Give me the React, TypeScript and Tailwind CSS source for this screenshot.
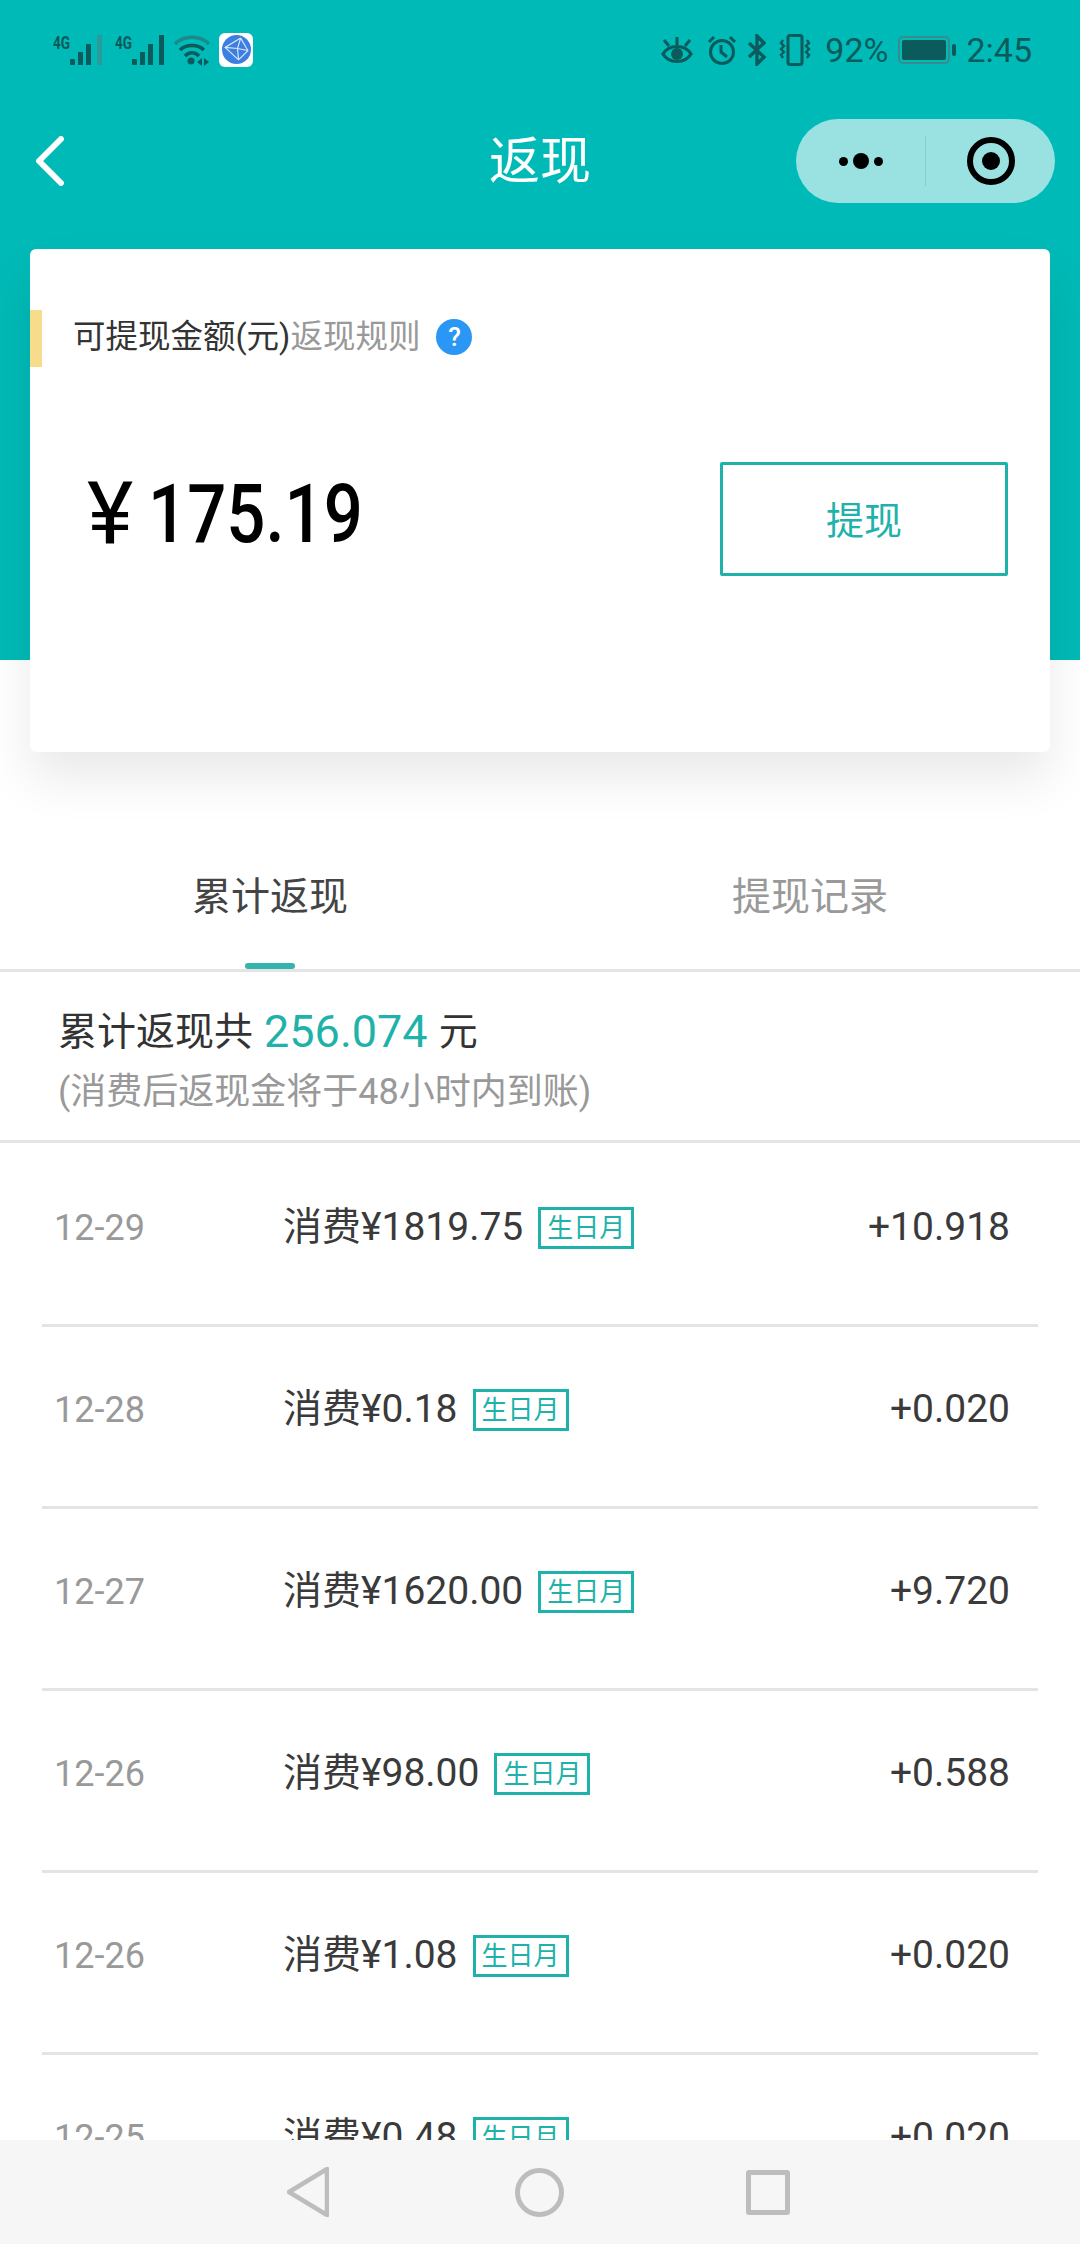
const CJK = "font-['Roboto','Noto_Sans_CJK_SC',sans-serif]";

const ROWS = [
  { date: "12-29", spend: "消费¥1819.75", back: "+10.918" },
  { date: "12-28", spend: "消费¥0.18", back: "+0.020" },
  { date: "12-27", spend: "消费¥1620.00", back: "+9.720" },
  { date: "12-26", spend: "消费¥98.00", back: "+0.588" },
  { date: "12-26", spend: "消费¥1.08", back: "+0.020" },
  { date: "12-25", spend: "消费¥0.48", back: "+0.020" },
];

// ─── Status bar icons ─────────────────────────────────────────────────────────

function Signal({ last }: { last: string }) {
  return (
    <svg viewBox="0 0 50 32" className="h-[32px] w-[50px]">
      <text x="0" y="15" fontSize="19" fontWeight="700" fill="#0b5a5c" fontFamily="Roboto" textLength="17" lengthAdjust="spacingAndGlyphs">4G</text>
      <g fill="#0b5a5c">
        <rect x="17" y="25" width="5" height="6" rx="1" />
        <rect x="25" y="18" width="5" height="13" />
        <rect x="33" y="10" width="5" height="21" />
      </g>
      <rect x="44" y="1" width="5" height="30" fill={last} />
    </svg>
  );
}

function Wifi() {
  return (
    <svg viewBox="0 0 38 32" fill="none" className="h-[32px] w-[38px]">
      <path d="M2 10C11 1 27 1 36 10" stroke="#1a8a8a" strokeWidth="3.5" />
      <path d="M7 16C13 10 25 10 31 16" stroke="#0b5a5c" strokeWidth="3.5" />
      <path d="M12 22C16 17.5 22 17.5 26 22" stroke="#0b5a5c" strokeWidth="3.5" />
      <circle cx="18" cy="27" r="3.5" fill="#0b5a5c" />
      <path d="M29 32v-8l-5 4zM31 24v8l5-4z" fill="#0b5a5c" />
    </svg>
  );
}

function AppBadge() {
  return (
    <div className="flex h-[34px] w-[34px] items-center justify-center rounded-[6px] bg-white">
      <svg viewBox="0 0 28 28" className="h-[29px] w-[29px]">
        <circle cx="14" cy="14" r="14" fill="#3c7fe0" />
        <path d="M18 3L3 12l13 12M18 3l-3 10-12-1M15 13l1 11M18 3l7 12-9 9M15 13l10 2" fill="none" stroke="#dbe9fb" strokeWidth="1.1" />
      </svg>
    </div>
  );
}

function Eye() {
  return (
    <svg viewBox="0 0 32 30" fill="none" className="h-[30px] w-[32px]" stroke="#0b5a5c" strokeWidth="3.2">
      <path d="M2 19C8 9 24 9 30 19C24 29 8 29 2 19Z" />
      <circle cx="16" cy="19" r="6" fill="#0b5a5c" stroke="none" />
      <path d="M16 10V2M8 11L3 5M24 11l5-6" strokeWidth="3" />
    </svg>
  );
}

function Alarm() {
  return (
    <svg viewBox="0 0 30 30" fill="none" className="h-[30px] w-[30px]" stroke="#0b5a5c" strokeWidth="3">
      <circle cx="15" cy="17" r="11.5" />
      <path d="M14 10v7l6 5M2 7l5-5M28 7l-5-5" />
    </svg>
  );
}

function Bluetooth() {
  return (
    <svg viewBox="0 0 20 32" fill="none" className="h-[32px] w-[20px]" stroke="#0b5a5c" strokeWidth="3.4">
      <path d="M2 9l15 14-7 7V2l7 7L2 23" />
    </svg>
  );
}

function Vibrate() {
  return (
    <svg viewBox="0 0 32 32" fill="none" className="h-[32px] w-[32px]" stroke="#0b5a5c">
      <rect x="9" y="1.5" width="14" height="29" rx="2" strokeWidth="3" />
      <path d="M4 6l-2 3 3 3-3 3 3 3-3 3 2 3M28 6l2 3-3 3 3 3-3 3 3 3-2 3" strokeWidth="2.4" />
    </svg>
  );
}

function Battery() {
  return (
    <svg viewBox="0 0 58 28" fill="none" className="h-[28px] w-[58px]">
      <rect x="1" y="1" width="50" height="26" rx="4" stroke="#3b8a8c" strokeWidth="2" />
      <rect x="4" y="4" width="44" height="20" rx="2" fill="#0b5a5c" />
      <rect x="54" y="8" width="4" height="12" rx="2" fill="#0b5a5c" />
    </svg>
  );
}

function StatusBar() {
  return (
    <div className="flex h-[98px] items-center justify-between pl-[53px] pr-[48px] pt-[1px]">
      <div className="flex items-center">
        <Signal last="#2a9a9a" />
        <div className="ml-[12px]">
          <Signal last="#0b5a5c" />
        </div>
        <div className="ml-[8px]">
          <Wifi />
        </div>
        <div className="ml-[8px]">
          <AppBadge />
        </div>
      </div>
      <div className="flex items-center font-['Roboto',sans-serif] text-[34px] leading-none text-[#0b5a5c]">
        <Eye />
        <div className="ml-[14px]">
          <Alarm />
        </div>
        <div className="ml-[10px]">
          <Bluetooth />
        </div>
        <div className="ml-[12px]">
          <Vibrate />
        </div>
        <span className="ml-[14px]">92%</span>
        <div className="ml-[10px]">
          <Battery />
        </div>
        <span className="ml-[10px]">2:45</span>
      </div>
    </div>
  );
}

// ─── Header nav ───────────────────────────────────────────────────────────────

function NavBar() {
  return (
    <div className="relative flex h-[126px] items-center justify-center">
      <svg viewBox="0 0 30 50" fill="none" className="absolute left-[35px] top-[38px] h-[50px] w-[30px]" stroke="white" strokeWidth="6" strokeLinecap="round" strokeLinejoin="round">
        <path d="M26 3L4 25l22 22" />
      </svg>
      <span className="text-[51px] leading-none text-white">返现</span>
      <div className="absolute left-[796px] top-[21px] flex h-[84px] w-[259px] items-center rounded-full bg-[#9ae2e2]">
        <div className="flex w-[129px] items-center justify-center gap-[5px] pl-[1px]">
          <span className="h-[9px] w-[9px] rounded-full bg-black" />
          <span className="h-[16px] w-[16px] rounded-full bg-black" />
          <span className="h-[9px] w-[9px] rounded-full bg-black" />
        </div>
        <div className="h-[50px] w-px bg-[#7fcfcf]" />
        <div className="flex flex-1 items-center justify-center">
          <div className="flex h-[48px] w-[48px] items-center justify-center rounded-full border-[6px] border-black">
            <span className="h-[18px] w-[18px] rounded-full bg-black" />
          </div>
        </div>
      </div>
    </div>
  );
}

// ─── Balance card ─────────────────────────────────────────────────────────────

function BalanceCard() {
  return (
    <div className="relative mx-[30px] mt-[25px] h-[503px] rounded-[6px] bg-white shadow-[0_26px_50px_rgba(0,0,0,0.09)]">
      <div className="absolute left-0 top-[61px] h-[57px] w-[12px] bg-[#f7dc8c]" />
      <div className="flex items-center pl-[43px] pt-[66px] text-[32.5px] leading-[44px]">
        <span className="text-[#333]">可提现金额(元)</span>
        <span className="text-[#999]">返现规则</span>
        <span className="ml-[16px] flex h-[36px] w-[36px] items-center justify-center rounded-full bg-[#2b97f5] text-[26px] font-medium leading-none text-white">?</span>
      </div>
      <div className="mt-[103px] flex items-start justify-between pl-[57px] pr-[42px]">
        <div className="-mt-[5px] flex h-[114px] items-center text-black">
          <span className="text-[88px] leading-none">¥</span>
          <span className="ml-[15px] w-[210px] origin-left scale-x-[.84] text-[82px] font-medium leading-none">175.19</span>
        </div>
        <div className="flex h-[114px] w-[288px] items-center justify-center rounded-[2px] border-[3px] border-[#1fb2ab] pt-[4px] text-[38px] text-[#1fb2ab]">
          提现
        </div>
      </div>
    </div>
  );
}

// ─── Tabs and list ────────────────────────────────────────────────────────────

function Tabs() {
  return (
    <div className="relative flex h-[147px] border-b-[3px] border-[#e4e4e4] bg-white text-[39px]">
      <div className="flex flex-1 items-center justify-center text-[#444]">累计返现</div>
      <div className="flex flex-1 items-center justify-center text-[#999]">提现记录</div>
      <div className="absolute bottom-0 left-[245px] h-[6px] w-[50px] rounded-full bg-[#35b3ad]" />
    </div>
  );
}

function Summary() {
  return (
    <div className="flex h-[171px] flex-col border-b-[3px] border-[#e4e4e4] pl-[58px] pt-[34px]">
      <div className="flex items-center text-[39px] leading-[52px] text-[#333]">
        累计返现共
        <span className="mx-[11px] text-[45px] text-[#1fb2ab]">256.074</span>元
      </div>
      <div className="mt-[11px] text-[36px] leading-[46px] text-[#999]">(消费后返现金将于48小时内到账)</div>
    </div>
  );
}

function Row({ date, spend, back }: { date: string; spend: string; back: string }) {
  return (
    <div className="mx-[42px] flex h-[182px] shrink-0 items-center border-b-[3px] border-[#e4e4e4] pb-[14px]">
      <span className="w-[241px] pl-[12px] text-[36px] text-[#999]">{date}</span>
      <span className="text-[39px] text-[#3a3a3a]">{spend}</span>
      <span className="ml-[15px] flex h-[42px] w-[96px] items-center justify-center border-[3px] border-[#1fb2ab] text-[26px] leading-none text-[#1fb2ab]">生日月</span>
      <span className="ml-auto pr-[28px] text-[39px] text-[#3a3a3a]">{back}</span>
    </div>
  );
}

export default function App() {
  return (
    <div className={`flex h-[2244px] w-[1080px] flex-col overflow-hidden bg-white ${CJK}`}>
      <div className="h-[660px] shrink-0 bg-[#00bab7]">
        <StatusBar />
        <NavBar />
        <BalanceCard />
      </div>
      <div className="mt-[165px] flex min-h-0 flex-1 flex-col">
        <Tabs />
        <Summary />
        <div className="flex min-h-0 flex-1 flex-col overflow-hidden pt-[2px]">
          {ROWS.map((row, i) => (
            <Row key={i} {...row} />
          ))}
        </div>
      </div>
      <div className="flex h-[104px] shrink-0 items-center bg-[#f6f6f6] pl-[287px]">
        <svg viewBox="0 0 42 50" fill="none" className="h-[50px] w-[42px]" stroke="#bdbdbd" strokeWidth="4.5" strokeLinejoin="round">
          <path d="M40 2v46L2 25z" />
        </svg>
        <div className="ml-[186px] h-[49px] w-[49px] rounded-full border-[5px] border-[#bdbdbd]" />
        <div className="ml-[182px] h-[45px] w-[44px] rounded-[3px] border-[5px] border-[#bdbdbd]" />
      </div>
    </div>
  );
}
